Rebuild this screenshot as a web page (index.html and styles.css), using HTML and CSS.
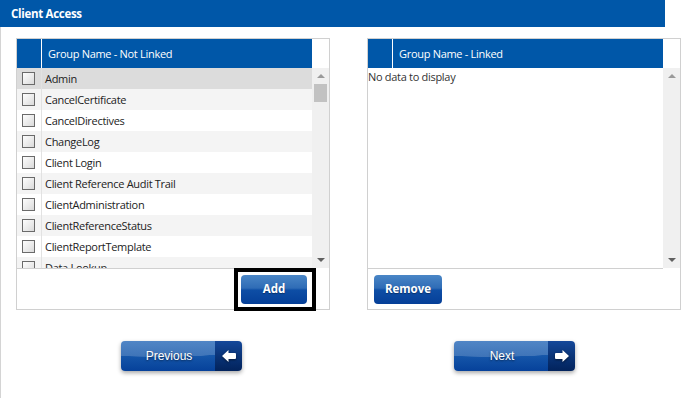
FILE: index.html
```
<!DOCTYPE html>
<html lang="en">
<head>
	<meta charset="UTF-8">
	<title>Client Access</title>
	<link rel="stylesheet" href="styles.css">
</head>
<body>
	<div id="page">
		<div class="title-bar">Client Access</div>
		<div class="content">
			<div class="panels">
				<!-- not linked -->
				<div class="panel">
					<div class="grid">
						<div class="grid-main">
							<div class="grid-head">
								<div class="head-check"></div>
								<div class="head-name">Group Name - Not Linked</div>
							</div>
							<div class="rows">
								<div class="row selected"><span class="cell-check"><i class="box"></i></span><span class="cell-name">Admin</span></div>
								<div class="row alt"><span class="cell-check"><i class="box"></i></span><span class="cell-name">CancelCertificate</span></div>
								<div class="row"><span class="cell-check"><i class="box"></i></span><span class="cell-name">CancelDirectives</span></div>
								<div class="row alt"><span class="cell-check"><i class="box"></i></span><span class="cell-name">ChangeLog</span></div>
								<div class="row"><span class="cell-check"><i class="box"></i></span><span class="cell-name">Client Login</span></div>
								<div class="row alt"><span class="cell-check"><i class="box"></i></span><span class="cell-name">Client Reference Audit Trail</span></div>
								<div class="row"><span class="cell-check"><i class="box"></i></span><span class="cell-name">ClientAdministration</span></div>
								<div class="row alt"><span class="cell-check"><i class="box"></i></span><span class="cell-name">ClientReferenceStatus</span></div>
								<div class="row"><span class="cell-check"><i class="box"></i></span><span class="cell-name">ClientReportTemplate</span></div>
								<div class="row alt"><span class="cell-check"><i class="box"></i></span><span class="cell-name">Data Lookup</span></div>
							</div>
						</div>
						<div class="vscroll">
							<div class="arrow-up"></div>
							<div class="thumb"></div>
							<div class="track"></div>
							<div class="arrow-down"></div>
						</div>
					</div>
					<div class="panel-foot foot-right">
						<span class="focus-ring"><a class="btn" href="#qq">Add</a></span>
					</div>
				</div>

				<!-- linked -->
				<div class="panel">
					<div class="grid">
						<div class="grid-main">
							<div class="grid-head">
								<div class="head-check"></div>
								<div class="head-name">Group Name - Linked</div>
							</div>
							<div class="rows">
								<div class="empty">No data to display</div>
							</div>
						</div>
						<div class="vscroll">
							<div class="arrow-up"></div>
							<div class="track"></div>
							<div class="arrow-down"></div>
						</div>
					</div>
					<div class="panel-foot">
						<a class="btn" href="#qq">Remove</a>
					</div>
				</div>
			</div>

			<div class="nav">
				<a class="nav-btn" href="#qq">
					<span class="nav-label">Previous</span>
					<span class="nav-icon">
						<svg width="16" height="14" viewBox="0 0 16 14"><path d="M1 7 L7.5 1 L7.5 4 L14 4 Q15 4 15 5 L15 9 Q15 10 14 10 L7.5 10 L7.5 13 Z" fill="#fff"/></svg>
					</span>
				</a>
				<a class="nav-btn next" href="#qq">
					<span class="nav-label">Next</span>
					<span class="nav-icon">
						<svg width="16" height="14" viewBox="0 0 16 14"><path d="M15 7 L8.5 1 L8.5 4 L2 4 Q1 4 1 5 L1 9 Q1 10 2 10 L8.5 10 L8.5 13 Z" fill="#fff"/></svg>
					</span>
				</a>
			</div>
		</div>
	</div>
</body>
</html>
```

FILE: styles.css
```
*{
	margin: 0;
	padding: 0;
	box-sizing: border-box;
	text-decoration: none;
}
body{
	width: 685px;
	height: 398px;
	overflow: hidden;
	background: #fff;
	font-family: "Segoe UI", "Open Sans", "Noto Sans", sans-serif;
	font-size: 11px;
	color: #222;
}
#page{
	height: 398px;
	display: flex;
	flex-direction: column;
}
.title-bar{
	width: 665px;
	height: 27px;
	line-height: 27px;
	padding-left: 11px;
	background: #0057a8;
	color: #fff;
	font-weight: bold;
	font-size: 11.5px;
	letter-spacing: -0.3px;
}
.content{
	flex: 1;
	border-left: 1px solid #d4d4d4;
	padding-left: 15px;
}
.panels{
	display: flex;
	gap: 37px;
	padding-top: 11px;
}
.panel{
	width: 314px;
	border: 1px solid #d0d0d0;
}
.grid{
	display: flex;
}
.grid-main{
	width: 295px;
	border-bottom: 1px solid #d0d0d0;
}
.grid-head{
	display: flex;
	height: 29px;
	background: #0057a8;
	color: #fff;
}
.head-check{
	width: 25px;
	border-right: 1px solid #fff;
}
.head-name{
	padding-left: 6px;
	line-height: 29px;
	letter-spacing: -0.3px;
}
.rows{
	height: 200px;
	overflow: hidden;
}
.row{
	display: flex;
	height: 21px;
	background: #fff;
}
.row.alt{
	background: #f4f4f4;
}
.row.selected{
	background: #dcdcdc;
}
.cell-check{
	width: 25px;
	border-right: 1px solid #e2e2e2;
	display: flex;
	align-items: center;
	justify-content: center;
	padding-right: 1px;
}
.box{
	display: block;
	width: 13px;
	height: 13px;
	border: 1px solid #6a6a6a;
	background: linear-gradient(135deg, #fdfdfd 0%, #e9e9e9 60%, #d9d9d9 100%);
}
.cell-name{
	padding-left: 3px;
	line-height: 21px;
	letter-spacing: -0.3px;
	white-space: nowrap;
}
.empty{
	line-height: 16px;
	padding-top: 1px;
	color: #333;
	letter-spacing: -0.3px;
}
.vscroll{
	width: 17px;
	height: 200px;
	margin-top: 29px;
	background: #f0f0f0;
	display: flex;
	flex-direction: column;
	align-items: center;
}
.arrow-up,
.arrow-down{
	width: 17px;
	height: 16px;
	position: relative;
}
.arrow-up:after,
.arrow-down:after{
	content: "";
	position: absolute;
	left: 5px;
	border-left: 4px solid transparent;
	border-right: 4px solid transparent;
}
.arrow-up:after{
	top: 6px;
	border-bottom: 4px solid #9a9a9a;
}
.arrow-down:after{
	top: 6px;
	border-top: 4px solid #606060;
}
.thumb{
	width: 13px;
	height: 18px;
	background: #c2c2c2;
}
.track{
	flex: 1;
}
.panel-foot{
	height: 40px;
	display: flex;
	align-items: flex-start;
	padding: 6px 0 0 6px;
}
.foot-right{
	justify-content: flex-end;
	padding: 0 13px 0 0;
}
.focus-ring{
	display: block;
	margin-top: -1px;
	border: 4px solid #000;
	padding: 3px 5px 3px 3px;
}
.btn{
	display: block;
	width: 68px;
	height: 29px;
	line-height: 28px;
	border-radius: 4px;
	color: #fff;
	font-weight: bold;
	font-size: 11.5px;
	text-align: center;
	background: linear-gradient(#4a86c6 0%, #2f6cb6 45%, #0e4ea5 52%, #053f98 100%);
	text-shadow: 0 1px 1px rgba(0,0,0,0.35);
}
.focus-ring .btn{
	width: 66px;
}
.nav{
	display: flex;
	gap: 212px;
	padding: 31px 0 0 105px;
}
.nav-btn{
	display: flex;
	width: 121px;
	height: 30px;
	border-radius: 4px;
	overflow: hidden;
	box-shadow: 0 2px 4px rgba(0,0,0,0.35);
	font-family: "Liberation Sans", Arial, sans-serif;
	font-size: 12px;
	color: #fff;
}
.nav-label{
	flex: 1;
	text-align: center;
	line-height: 30px;
	padding-left: 2px;
	text-shadow: 0 1px 2px rgba(0,0,0,0.5);
	background:
		radial-gradient(ellipse 140px 22px at 40% -6px, rgba(255,255,255,0.18) 0%, rgba(255,255,255,0.18) 98%, transparent 100%),
		linear-gradient(#2a6bb9 0%, #1556a9 50%, #06419a 100%);
}
.nav-icon{
	width: 27px;
	display: flex;
	align-items: center;
	justify-content: center;
	background: linear-gradient(#14489a 0%, #0a3478 50%, #02235c 100%);
}
.nav-icon svg{
	filter: drop-shadow(0 1px 1px rgba(0,0,0,0.5));
}
```
